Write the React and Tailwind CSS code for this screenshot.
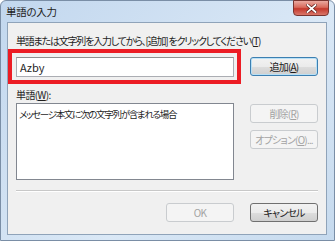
// 単語の入力 ダイアログ (Windows 7 風)
const font = "font-['Noto_Sans_CJK_JP','Noto_Sans',sans-serif] [font-feature-settings:'palt']"

function Btn({ children, disabled, primary, className = '' }) {
    // ボタンの状態ごとに枠と背景を切り替える
    let look = 'border-[#707070] bg-[linear-gradient(#f2f2f2_0%,#ebebeb_50%,#dddddd_51%,#cfcfcf_100%)] text-[#1a1a1a]'
    if (primary) look = 'border-[#3c7fb1] shadow-[inset_0_0_0_1px_#b8e0f6] bg-[linear-gradient(#f2f2f2_0%,#ebebeb_50%,#dddddd_51%,#cfcfcf_100%)] text-[#1a1a1a]'
    if (disabled) look = 'border-[#c9cccf] bg-[#f4f4f4] text-[#a3a3a3]'
    return (
        <div className={`h-[19px] w-[68px] rounded-[3px] border flex items-center justify-center whitespace-nowrap text-[10px] tracking-[-0.8px] leading-none ${look} ${className}`}>
            {children}
        </div>
    )
}

function U({ children }) {
    return <span className="underline underline-offset-1">{children}</span>
}

export default function App() {
    return (
        <div className={`w-[335px] h-[241px] flex flex-col bg-[linear-gradient(135deg,#c2d7ee,#dae8f6_60%,#c6daee)] border border-[#7a8ea6] rounded-t-[6px] ${font}`}>
            {/* タイトルバー */}
            <div className="h-[21px] flex items-start justify-between pl-[5px] pr-[5px]">
                <span className="mt-[4px] text-[10.5px] tracking-[-0.3px] leading-[14px] text-[#222]">単語の入力</span>
                <div className="w-[36px] h-[16px] -mt-px rounded-b-[4px] border border-[#7a3530] bg-[linear-gradient(#eaa9a0_0%,#d96a5c_45%,#c4382c_55%,#d9776a_100%)] flex items-center justify-center">
                    <svg width="11" height="9" viewBox="0 0 11 9">
                        <path d="M1.5 1 L9.5 8 M9.5 1 L1.5 8" stroke="#5a1a16" strokeWidth="3.2" strokeLinecap="square" />
                        <path d="M1.5 1 L9.5 8 M9.5 1 L1.5 8" stroke="#fff" strokeWidth="1.8" strokeLinecap="square" />
                    </svg>
                </div>
            </div>

            {/* 本体 */}
            <div className="ml-[6px] mr-[7px] mb-[5px] flex-1 border border-[#8fa3b9] bg-[#f0f0f0] px-[8px] pt-[11px] text-[10px] tracking-[-1.2px] text-[#1e1e1e]">
                <p className="leading-[14px] whitespace-nowrap">単語または文字列を入力してから、[追加]&nbsp;をクリックしてください(<U>T</U>)</p>

                <div className="mt-[9px] flex gap-[16px]">
                    <div className="relative">
                        <div className="w-[218px] h-[20px] bg-white border border-[#abadb3] border-t-[#8e8f8f] flex items-center pl-[3px] text-[11px] tracking-normal">
                            Azby
                        </div>
                        {/* 赤枠の注釈 */}
                        <div className="absolute -left-[8px] -right-[7px] -top-[8px] -bottom-[7px] border-4 border-[#ec1c24]" />
                    </div>
                    <Btn primary>追加(<U>A</U>)</Btn>
                </div>

                <p className="mt-[11px] leading-[14px] tracking-[-0.6px]">単語(<U>W</U>):</p>

                <div className="mt-px flex gap-[16px]">
                    <div className="w-[218px] h-[77px] bg-white border border-[#828790] pl-[2px] pt-[3px] leading-[14px] text-[9.5px] tracking-[-1.3px] whitespace-nowrap">
                        メッセージ本文に次の文字列が含まれる場合
                    </div>
                    <div className="flex flex-col gap-[7px] pt-px">
                        <Btn disabled>削除(<U>R</U>)</Btn>
                        <Btn disabled>オプション(<U>O</U>)...</Btn>
                    </div>
                </div>

                <div className="mt-[10px] h-px bg-[#c8c8c8] border-b border-white box-content" />

                <div className="mt-[11px] flex justify-end gap-[16px]">
                    <Btn disabled>OK</Btn>
                    <Btn>キャンセル</Btn>
                </div>
            </div>
        </div>
    )
}
